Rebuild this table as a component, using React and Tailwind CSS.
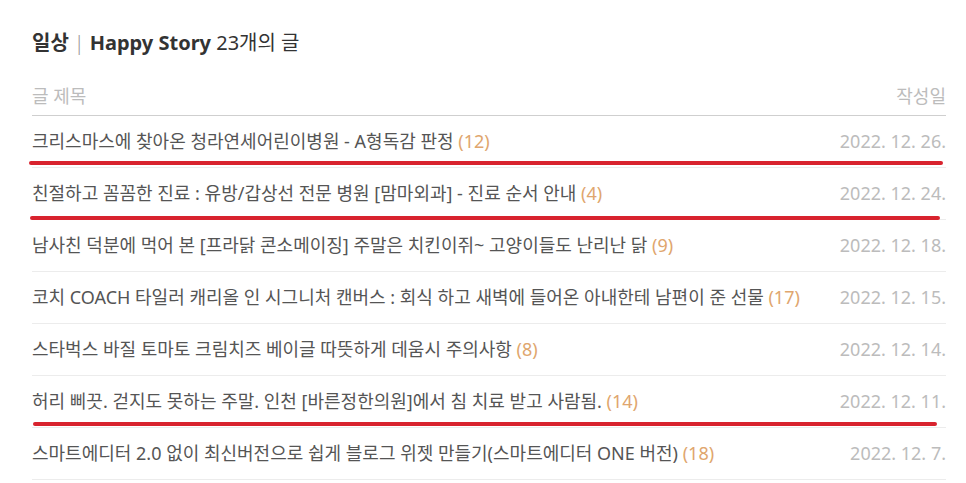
import React from 'react';

const posts = [
  { title: '크리스마스에 찾아온 청라연세어린이병원 - A형독감 판정', count: 12, date: '2022. 12. 26.', mark: 'left-[-3px] right-[3px] bottom-[2px]' },
  { title: '친절하고 꼼꼼한 진료 : 유방/갑상선 전문 병원 [맘마외과] - 진료 순서 안내', count: 4, date: '2022. 12. 24.', mark: 'left-[-2px] right-[6px] bottom-[-1px]' },
  { title: '남사친 덕분에 먹어 본 [프라닭 콘소메이징] 주말은 치킨이쥐~ 고양이들도 난리난 닭', count: 9, date: '2022. 12. 18.' },
  { title: '코치 COACH 타일러 캐리올 인 시그니처 캔버스 : 회식 하고 새벽에 들어온 아내한테 남편이 준 선물', count: 17, date: '2022. 12. 15.' },
  { title: '스타벅스 바질 토마토 크림치즈 베이글 따뜻하게 데움시 주의사항', count: 8, date: '2022. 12. 14.' },
  { title: '허리 삐끗. 걷지도 못하는 주말. 인천 [바른정한의원]에서 침 치료 받고 사람됨.', count: 14, date: '2022. 12. 11.', mark: 'left-[1px] right-[9px] bottom-[1px]' },
  { title: '스마트에디터 2.0 없이 최신버전으로 쉽게 블로그 위젯 만들기(스마트에디터 ONE 버전)', count: 18, date: '2022. 12. 7.' },
];

const PostRow = ({ post }) => (
  <li className="relative flex items-center justify-between h-[52px] border-b border-[#ececec] whitespace-nowrap">
    <span className="text-[18px] text-[#555]">
      {post.title} <span className="text-[#e0a66e]">({post.count})</span>
    </span>
    <span className="text-[18px] text-[#bcbcbc]">{post.date}</span>
    {post.mark && (
      <span className={`absolute h-[4px] rounded-full bg-[#d8232e] ${post.mark}`} />
    )}
  </li>
);

const App = () => {
  return (
    <div
      className="w-[966px] h-[483px] bg-white pl-[32px] pr-[20px] overflow-hidden"
      style={{ fontFamily: '"Noto Sans", "Noto Sans CJK KR", sans-serif' }}
    >
      <h2 className="pt-[28px] text-[20px] leading-[30px] text-[#333]">
        <span className="font-bold">일상</span>
        <span className="text-[#999] mx-[5px] font-light">|</span>
        <span className="font-bold">Happy Story</span>{' '}
        <span>23개의 글</span>
      </h2>
      <div className="mt-[20px] flex items-center justify-between h-[38px] border-b border-[#cfcfcf] text-[18px] text-[#bcbcbc]">
        <span>글 제목</span>
        <span>작성일</span>
      </div>
      <ul>
        {posts.map((post, i) => (
          <PostRow key={i} post={post} />
        ))}
      </ul>
    </div>
  );
};

export default App;
